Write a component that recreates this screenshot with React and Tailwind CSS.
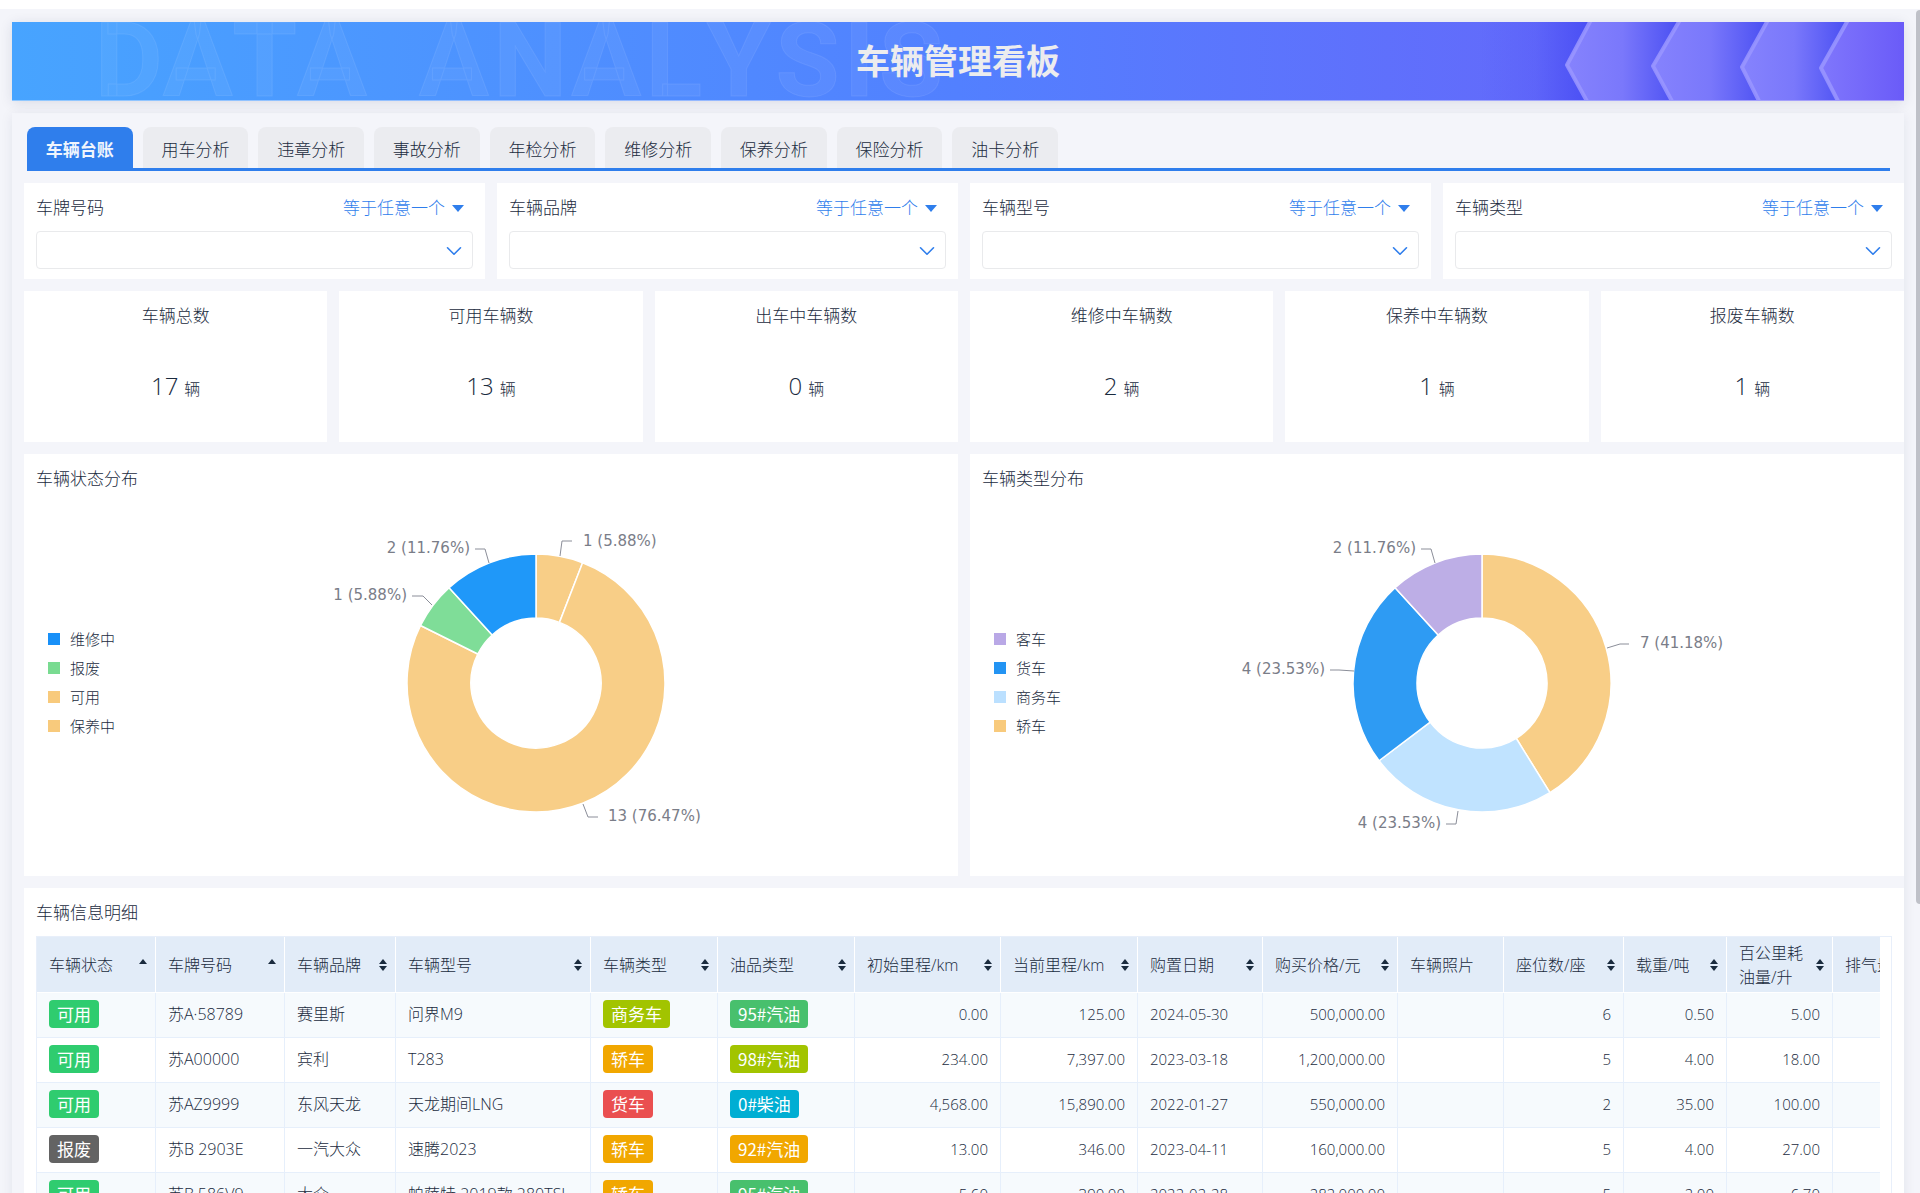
import { useState } from "react";
import { ChevronDown } from "lucide-react";

const TABS = [
  "车辆台账", "用车分析", "违章分析", "事故分析", "年检分析",
  "维修分析", "保养分析", "保险分析", "油卡分析",
];

const FILTERS = [
  { id: "plate", label: "车牌号码" },
  { id: "brand", label: "车辆品牌" },
  { id: "model", label: "车辆型号" },
  { id: "type",  label: "车辆类型" },
];

const STATS = [
  { label: "车辆总数",     value: 17 },
  { label: "可用车辆数",   value: 13 },
  { label: "出车中车辆数", value: 0 },
  { label: "维修中车辆数", value: 2 },
  { label: "保养中车辆数", value: 1 },
  { label: "报废车辆数",   value: 1 },
];

// line: leader points from the ring outwards, relative to the centre of the donut
const STATUS_CHART = {
  title: "车辆状态分布",
  legend: [
    { name: "维修中", color: "bg-[#1890f8]" },
    { name: "报废",   color: "bg-[#79db91]" },
    { name: "可用",   color: "bg-[#f8ca7c]" },
    { name: "保养中", color: "bg-[#f8ca7c]" },
  ],
  slices: [
    { value: 1,  fill: "#f8ce87", text: "1 (5.88%)",   line: "24,-127 26,-142 36,-142",    x: 47,   y: -142, anchor: "start" },
    { value: 13, fill: "#f8ce87", text: "13 (76.47%)", line: "47,121 52,134 62,134",       x: 72,   y: 133,  anchor: "start" },
    { value: 1,  fill: "#7fdd98", text: "1 (5.88%)",   line: "-104,-78 -113,-87 -124,-87", x: -129, y: -88,  anchor: "end" },
    { value: 2,  fill: "#1f98f9", text: "2 (11.76%)",  line: "-47,-120 -51,-134 -61,-134", x: -66,  y: -135, anchor: "end" },
  ],
};

const TYPE_CHART = {
  title: "车辆类型分布",
  legend: [
    { name: "客车",   color: "bg-[#b9a8e6]" },
    { name: "货车",   color: "bg-[#2394f3]" },
    { name: "商务车", color: "bg-[#bbe0ff]" },
    { name: "轿车",   color: "bg-[#f8ca7c]" },
  ],
  slices: [
    { value: 7, fill: "#f8ce87", text: "7 (41.18%)", line: "125,-35 138,-39 147,-39",    x: 158,  y: -40,  anchor: "start" },
    { value: 4, fill: "#c0e3ff", text: "4 (23.53%)", line: "-24,128 -26,141 -36,141",    x: -41,  y: 140,  anchor: "end" },
    { value: 4, fill: "#2e9bf3", text: "4 (23.53%)", line: "-128,-12 -143,-13 -152,-13", x: -157, y: -14,  anchor: "end" },
    { value: 2, fill: "#bdaee6", text: "2 (11.76%)", line: "-47,-120 -51,-134 -61,-134", x: -66,  y: -135, anchor: "end" },
  ],
};

const COLUMNS = [
  { key: "status",  label: "车辆状态",        width: "w-[119px]", sort: "asc", kind: "tag" },
  { key: "plate",   label: "车牌号码",        width: "w-[129px]", sort: "asc" },
  { key: "brand",   label: "车辆品牌",        width: "w-[111px]", sort: "both" },
  { key: "model",   label: "车辆型号",        width: "w-[195px]", sort: "both" },
  { key: "type",    label: "车辆类型",        width: "w-[127px]", sort: "both", kind: "tag" },
  { key: "fuel",    label: "油品类型",        width: "w-[137px]", sort: "both", kind: "tag" },
  { key: "initKm",  label: "初始里程/km",     width: "w-[146px]", sort: "both", kind: "num" },
  { key: "curKm",   label: "当前里程/km",     width: "w-[137px]", sort: "both", kind: "num" },
  { key: "date",    label: "购置日期",        width: "w-[125px]", sort: "both", kind: "date" },
  { key: "price",   label: "购买价格/元",     width: "w-[135px]", sort: "both", kind: "num" },
  { key: "photo",   label: "车辆照片",        width: "w-[106px]" },
  { key: "seats",   label: "座位数/座",       width: "w-[120px]", sort: "both", kind: "num" },
  { key: "load",    label: "载重/吨",         width: "w-[103px]", sort: "both", kind: "num" },
  { key: "per100",  label: "百公里耗油量/升", width: "w-[106px]", sort: "both", kind: "num" },
  { key: "exhaust", label: "排气量/L",        width: "w-[121px]", sort: "both", kind: "num" },
];

const ROWS = [
  { status: "可用", plate: "苏A·58789", brand: "赛里斯",   model: "问界M9",              type: "商务车", fuel: "95#汽油", initKm: "0.00",     curKm: "125.00",    date: "2024-05-30", price: "500,000.00",   seats: "6", load: "0.50",  per100: "5.00" },
  { status: "可用", plate: "苏A00000",  brand: "宾利",     model: "T283",                type: "轿车",   fuel: "98#汽油", initKm: "234.00",   curKm: "7,397.00",  date: "2023-03-18", price: "1,200,000.00", seats: "5", load: "4.00",  per100: "18.00" },
  { status: "可用", plate: "苏AZ9999",  brand: "东风天龙", model: "天龙期间LNG",         type: "货车",   fuel: "0#柴油",  initKm: "4,568.00", curKm: "15,890.00", date: "2022-01-27", price: "550,000.00",   seats: "2", load: "35.00", per100: "100.00" },
  { status: "报废", plate: "苏B 2903E", brand: "一汽大众", model: "速腾2023",            type: "轿车",   fuel: "92#汽油", initKm: "13.00",    curKm: "346.00",    date: "2023-04-11", price: "160,000.00",   seats: "5", load: "4.00",  per100: "27.00" },
  { status: "可用", plate: "苏B·586V9", brand: "大众",     model: "帕萨特 2019款 280TSI", type: "轿车",   fuel: "95#汽油", initKm: "5.60",     curKm: "390.00",    date: "2022-02-28", price: "282,000.00",   seats: "5", load: "2.00",  per100: "6.70" },
];

const TAG_COLORS = {
  "可用":    "bg-[#2fcc6f]",
  "报废":    "bg-[#636363]",
  "商务车":  "bg-[#a2c400]",
  "轿车":    "bg-[#f1a700]",
  "货车":    "bg-[#ea4f50]",
  "95#汽油": "bg-[#48c06d]",
  "98#汽油": "bg-[#a2c400]",
  "92#汽油": "bg-[#f1a700]",
  "0#柴油":  "bg-[#00aed3]",
};

function slicePath(from, to, outer = 129, inner = 65) {
  const pt = (f, r) => `${Math.sin(f * 2 * Math.PI) * r},${-Math.cos(f * 2 * Math.PI) * r}`;
  const large = to - from > 0.5 ? 1 : 0;
  return `M${pt(from, outer)} A${outer},${outer} 0 ${large} 1 ${pt(to, outer)} L${pt(to, inner)} A${inner},${inner} 0 ${large} 0 ${pt(from, inner)} Z`;
}

function Banner() {
  return (
    <header className="relative h-[79px] overflow-hidden flex items-center justify-center border-b border-white/40 bg-linear-to-r from-[#47a4ff] via-[#5280ff] to-[#6a5bf8] bg-origin-border shadow-[0_2px_12px_rgba(30,40,80,0.12)]">
      <div aria-hidden="true"
        className="absolute inset-y-0 left-[83px] flex items-center gap-[52px] font-[Roboto,sans-serif] font-bold text-[104px] leading-none text-white/5 [-webkit-text-stroke:1px_rgba(255,255,255,0.08)]">
        <div className="flex justify-between w-[272px]">{"DATA".split("").map((c, i) => <span key={i}>{c}</span>)}</div>
        <div className="flex justify-between w-[524px]">{"ANALYSIS".split("").map((c, i) => <span key={i}>{c}</span>)}</div>
      </div>
      <svg aria-hidden="true" className="absolute right-0 top-0 h-[79px] w-[424px]" viewBox="0 0 424 79">
        <defs>
          <linearGradient id="shade" x1="0" x2="1">
            <stop offset="0" stopColor="#4a4ff4" stopOpacity="0" />
            <stop offset="0.5" stopColor="#4a4ff4" stopOpacity="0.2" />
            <stop offset="1" stopColor="#4a4ff4" />
          </linearGradient>
          <linearGradient id="hex" x1="0" x2="1">
            <stop offset="0" stopColor="#8683fd" />
            <stop offset="0.5" stopColor="#7a78fb" />
            <stop offset="1" stopColor="#4a4ff2" />
          </linearGradient>
          <linearGradient id="hexLast" x1="0" x2="1">
            <stop offset="0" stopColor="#8077fc" />
            <stop offset="1" stopColor="#6a5bf8" />
          </linearGradient>
        </defs>
        <path d="M0,0 H110 L86,43 L107,79 H0 Z" fill="url(#shade)" />
        <path d="M110,0 H199 L172,44 L192,79 H107 L86,43 Z" fill="url(#hex)" />
        <path d="M199,0 H287 L261,45 L279,79 H192 L172,44 Z" fill="url(#hex)" />
        <path d="M287,0 H367 L340,46 L357,79 H279 L261,45 Z" fill="url(#hex)" />
        <path d="M367,0 H424 V79 H357 L340,46 Z" fill="url(#hexLast)" />
        <g fill="none" stroke="#9a96ff" strokeOpacity="0.85" strokeWidth="4" strokeLinejoin="round">
          <path d="M111,-2 L87,43 L108,81" />
          <path d="M200,-2 L173,44 L193,81" />
          <path d="M288,-2 L262,45 L280,81" />
          <path d="M368,-2 L341,46 L359,81" />
        </g>
      </svg>
      <h1 className="relative text-[34px] leading-[48px] font-bold text-[#ececee]">车辆管理看板</h1>
    </header>
  );
}

function FilterCard({ id, label }) {
  return (
    <div className="bg-white px-3 pt-3 pb-[10px]">
      <div className="flex items-center justify-between h-[26px] mb-[10px]">
        <label htmlFor={id}>{label}</label>
        <button type="button" className="flex items-center gap-[7px] pr-[9px] text-[#2f7eec] cursor-pointer">
          等于任意一个
          <svg className="w-3 h-[7px]" viewBox="0 0 12 7" fill="currentColor"><path d="M0,0 H12 L6,7 Z" /></svg>
        </button>
      </div>
      <div className="relative">
        <select id={id} defaultValue=""
          className="block w-full h-[38px] appearance-none rounded-[4px] border border-[#e9eaec] bg-white pl-3 pr-9 outline-none">
          <option value=""></option>
        </select>
        <ChevronDown size={26} strokeWidth={1.5}
          className="absolute right-[6px] top-[7px] text-[#2f7eec] pointer-events-none" />
      </div>
    </div>
  );
}

function DonutCard({ title, legend, slices }) {
  const total = slices.reduce((sum, s) => sum + s.value, 0);
  let acc = 0;
  const arcs = slices.map(s => {
    const from = acc / total;
    acc += s.value;
    return { ...s, d: slicePath(from, acc / total) };
  });

  return (
    <section className="bg-white p-3">
      <h2 className="h-[35px] leading-[26px]">{title}</h2>
      <div className="flex items-center">
        <ul className="w-[90px] shrink-0 pl-3 text-[15px] leading-[29px]">
          {legend.map(l => (
            <li key={l.name} className="flex items-center gap-[10px] whitespace-nowrap">
              <span className={`w-3 h-3 ${l.color}`} />
              {l.name}
            </li>
          ))}
        </ul>
        <div className="flex-1 flex justify-center">
          <svg className="w-[520px] h-[363px]" viewBox="-260 -182 520 363" role="img" aria-label={title}>
            {arcs.map((s, i) => (
              <path key={i} d={s.d} fill={s.fill} stroke="#fff" strokeWidth="1.5" strokeLinejoin="round" />
            ))}
            {arcs.map((s, i) => (
              <g key={i}>
                <polyline points={s.line} fill="none" stroke="#8b8e99" strokeWidth="1" />
                <text x={s.x} y={s.y + 5} textAnchor={s.anchor} fill="#7a7d88"
                  className="font-['DejaVu_Sans',sans-serif] font-normal text-[15px]">{s.text}</text>
              </g>
            ))}
          </svg>
        </div>
      </div>
    </section>
  );
}

function SortIcon({ mode }) {
  return (
    <svg className="w-2 h-3 shrink-0" viewBox="0 0 8 12" fill="#1a2b3e">
      <path d="M4,0 L8,5 H0 Z" />
      {mode === "both" && <path d="M4,12 L8,7 H0 Z" />}
    </svg>
  );
}

function VehicleTable() {
  return (
    <section className="bg-white p-3">
      <h2 className="h-9 leading-[26px]">车辆信息明细</h2>
      <div className="border border-[#e8effa] pr-[11px]">
        <div className="overflow-hidden">
          <table className="table-fixed w-[1917px] border-separate border-spacing-0 text-[16px]">
            <thead>
              <tr className="h-14">
                {COLUMNS.map(c => (
                  <th key={c.key} scope="col"
                    className={`${c.width} bg-[#e2ecf8] border-r border-b border-white pl-3 pr-2 font-light text-left leading-6`}>
                    <div className="flex items-center justify-between gap-2">
                      <span>{c.label}</span>
                      {c.sort && (
                        <button type="button" aria-label={`排序 ${c.label}`} className="cursor-pointer">
                          <SortIcon mode={c.sort} />
                        </button>
                      )}
                    </div>
                  </th>
                ))}
              </tr>
            </thead>
            <tbody>
              {ROWS.map(row => (
                <tr key={row.plate} className="h-[45px] odd:bg-[#f6fafd] even:bg-white">
                  {COLUMNS.map(c => (
                    <td key={c.key}
                      className={`border-r border-b border-[#e6effb] px-3 pb-[3px] leading-6 whitespace-nowrap ${
                        c.kind === "num" ? "text-right text-[15px]" : c.kind === "date" ? "text-[15px]" : ""
                      }`}>
                      {c.kind === "tag"
                        ? <span className={`block w-fit rounded-[4px] px-2 text-[17px] leading-7 font-normal text-white font-['Noto_Sans_CJK_SC',sans-serif] ${TAG_COLORS[row[c.key]]}`}>{row[c.key]}</span>
                        : row[c.key]}
                    </td>
                  ))}
                </tr>
              ))}
            </tbody>
          </table>
        </div>
      </div>
    </section>
  );
}

export default function App() {
  const [activeTab, setActiveTab] = useState("车辆台账");

  return (
    <div className="relative h-screen overflow-hidden bg-[#f4f5fa] border-t-[9px] border-white pl-3 pr-4 pt-[13px] text-[17px] font-light text-[#1a2b3e] font-['Open_Sans','Noto_Sans_CJK_SC',sans-serif]">
      <Banner />

      <main className="mt-3 pt-[14px] pl-3 shadow-[0_2px_12px_rgba(30,40,80,0.08)]">
        {/* Tabs */}
        <nav className="ml-[3px] mr-[14px] border-b-[3px] border-[#2f7eec]">
          <div className="grid grid-cols-9 gap-[10px] max-w-[1031px]">
            {TABS.map(tab => (
              <button key={tab} type="button" onClick={() => setActiveTab(tab)}
                className={`h-[41px] pt-1 rounded-t-[8px] whitespace-nowrap cursor-pointer ${
                  activeTab === tab ? "bg-[#2f7eec] text-[#f0f5fd] font-bold" : "bg-[#ebecf0]"
                }`}>
                {tab}
              </button>
            ))}
          </div>
        </nav>

        <div className="mt-3 flex flex-col gap-3">
          {/* Filters */}
          <div className="grid grid-cols-4 gap-3">
            {FILTERS.map(f => <FilterCard key={f.id} {...f} />)}
          </div>

          {/* Stats */}
          <div className="grid grid-cols-6 gap-3">
            {STATS.map(s => (
              <div key={s.label} className="h-[151px] bg-white pt-3 text-center">
                <p className="leading-[26px]">{s.label}</p>
                <p className="mt-[39px] text-[24px] leading-9">
                  {s.value}<span className="ml-[6px] text-[16px]">辆</span>
                </p>
              </div>
            ))}
          </div>

          {/* Charts */}
          <div className="grid grid-cols-2 gap-3">
            <DonutCard {...STATUS_CHART} />
            <DonutCard {...TYPE_CHART} />
          </div>

          <VehicleTable />
        </div>
      </main>

      {/* page scroll thumb */}
      <div className="absolute right-0 top-px h-[894px] w-1 rounded-l-[4px] bg-[#bfc1c8]" />
    </div>
  );
}
